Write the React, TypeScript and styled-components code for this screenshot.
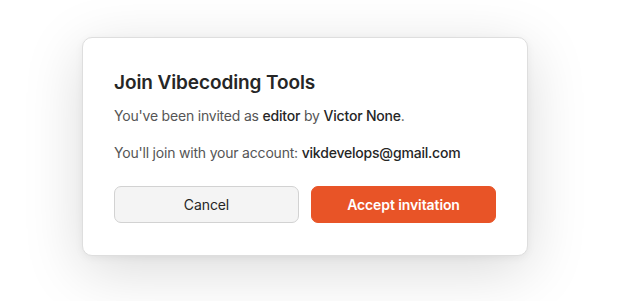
import styled, { createGlobalStyle } from 'styled-components'

const GlobalStyle = createGlobalStyle`
  html, body {
    margin: 0;
    padding: 0;
    background: #ffffff;
  }

  body {
    font-family: Inter, "Noto Sans", sans-serif;
    -webkit-font-smoothing: antialiased;
  }
`

const Page = styled.main`
  width: 638px;
  height: 301px;
  box-sizing: border-box;
  padding: 37px 0 0 82px;
`

const Card = styled.section`
  width: 446px;
  box-sizing: border-box;
  padding: 31px 31px 32px;
  border: 1px solid #dedede;
  border-radius: 10px;
  background: #ffffff;
  box-shadow: 0 14px 60px rgba(0, 0, 0, 0.15), 0 2px 8px rgba(0, 0, 0, 0.05);
`

const Title = styled.h2`
  margin: 0 0 9px;
  color: #262626;
  font-size: 19px;
  font-weight: 600;
  line-height: 28px;
  letter-spacing: -0.1px;
`

const Text = styled.p<{ $gap?: number }>`
  margin: 0 0 ${({ $gap }) => $gap ?? 0}px;
  color: #555555;
  font-size: 14px;
  line-height: 20px;
  letter-spacing: -0.2px;

  strong {
    color: #262626;
    font-weight: 500;
  }
`

const Actions = styled.div`
  display: grid;
  grid-template-columns: 1fr 1fr;
  gap: 12px;
`

const Button = styled.button<{ $primary?: boolean }>`
  height: 37px;
  border-radius: 7px;
  border: 1px solid ${({ $primary }) => ($primary ? '#e85427' : '#d2d2d2')};
  background: ${({ $primary }) => ($primary ? '#e85427' : '#f4f4f4')};
  color: ${({ $primary }) => ($primary ? '#ffffff' : '#262626')};
  font-family: inherit;
  font-size: 14px;
  font-weight: ${({ $primary }) => ($primary ? 600 : 400)};
  letter-spacing: -0.1px;
  cursor: pointer;
`

export default function App() {
  return (
    <>
      <GlobalStyle />
      <Page>
        <Card>
          <Title>Join Vibecoding Tools</Title>
          <Text $gap={17}>
            You've been invited as <strong>editor</strong> by{' '}
            <strong>Victor None</strong>.
          </Text>
          <Text $gap={23}>
            You'll join with your account: <strong>vikdevelops@gmail.com</strong>
          </Text>
          <Actions>
            <Button>Cancel</Button>
            <Button $primary>Accept invitation</Button>
          </Actions>
        </Card>
      </Page>
    </>
  )
}
